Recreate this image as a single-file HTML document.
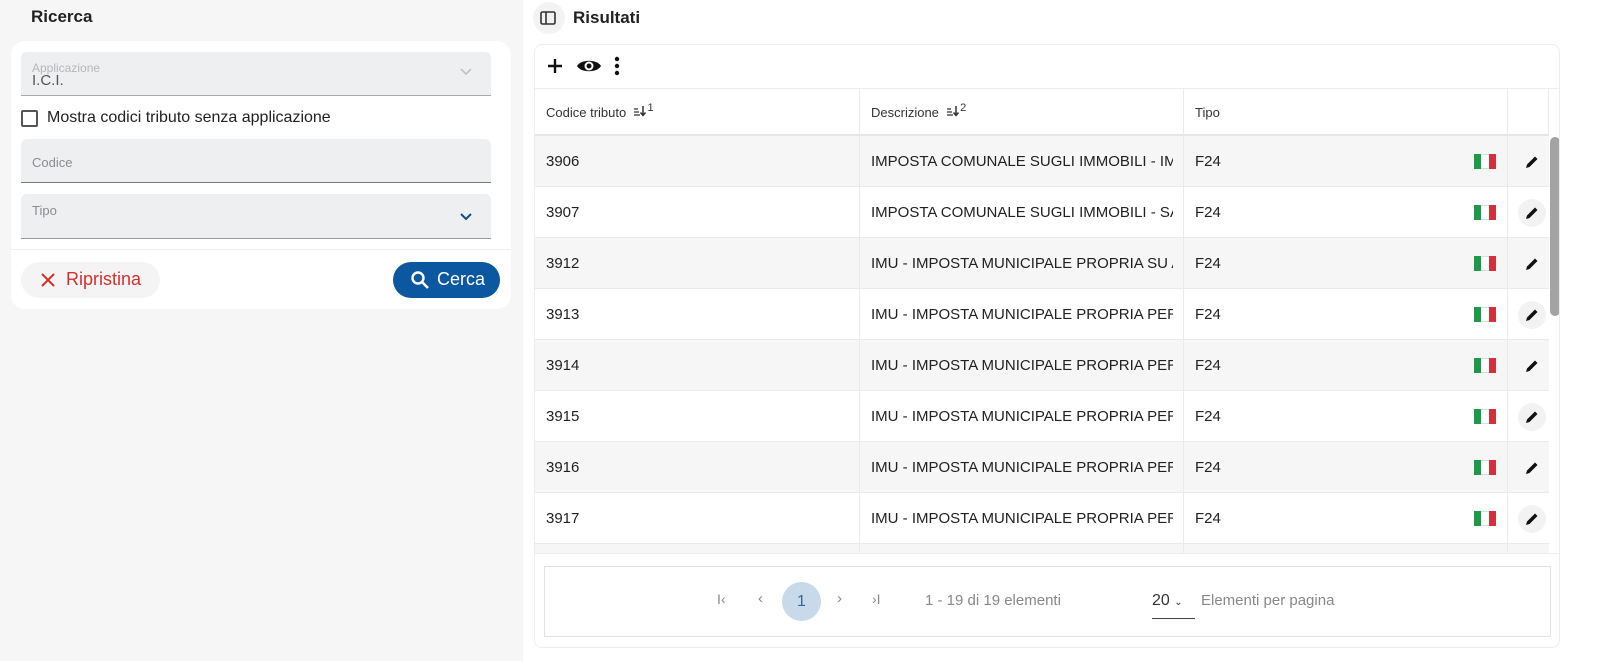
<!DOCTYPE html>
<html><head><meta charset="utf-8"><style>
*{box-sizing:border-box;margin:0;padding:0}
body{width:1600px;height:661px;overflow:hidden;background:#fff;font-family:"Liberation Sans",sans-serif;color:#212121;position:relative}
.left{position:absolute;left:0;top:0;width:523px;height:661px;background:#f6f6f6}
.abs{position:absolute}
.field{position:absolute;left:21px;width:470px;background:#eeeff1;border-radius:6px 6px 0 0;border-bottom:1px solid #777}
.lbl{position:absolute;left:11px;font-size:12px;color:#8a8c90}
.card{position:absolute;left:534px;top:44px;width:1026px;height:604px;border:1px solid #eceeee;border-radius:8px;overflow:hidden;background:#fff}
.row{position:absolute;left:0;width:1014px;height:51px;border-bottom:1px solid #ebebeb;font-size:15px}
.row.s{background:#f6f6f6}
.c{position:absolute;top:0;height:51px;line-height:51px;overflow:hidden;white-space:nowrap;border-right:1px solid #ebebeb}
.h{position:absolute;top:0;height:46px;border-right:1px solid #ebebeb;padding-left:11px;padding-top:16px;font-size:13px;white-space:nowrap}
.flag{position:absolute;left:939px;top:18px;width:22px;height:15px;display:flex}
.flag i{flex:1}
.pen{position:absolute;left:983px;top:12px;width:28px;height:28px;border-radius:50%}
.sup{position:relative;top:-6px;font-size:11px}
</style></head><body>
<div class="left">
  <div class="abs" style="left:31px;top:7px;font-size:17px;font-weight:bold;color:#222">Ricerca</div>
  <div class="abs" style="left:11px;top:41px;width:500px;height:268px;background:#fff;border-radius:14px"></div>
  <div class="field" style="top:52px;height:44px;border-bottom-color:#aaa">
    <div class="lbl" style="top:9px;color:#b5b7ba">Applicazione</div>
    <div class="abs" style="left:11px;top:20px;font-size:15px;color:#555">I.C.I.</div>
    <svg class="abs" style="left:438px;top:15px" width="14" height="10" viewBox="0 0 14 10"><path d="M2 2l5 5 5-5" fill="none" stroke="#c2c4c8" stroke-width="1.8"/></svg>
  </div>
  <div class="abs" style="left:21px;top:110px;width:17px;height:17px;border:2px solid #555;border-radius:2px"></div>
  <div class="abs" style="left:47px;top:109px;font-size:16px;color:#222">Mostra codici tributo senza applicazione</div>
  <div class="field" style="top:139px;height:44px"><div class="lbl" style="top:16px;font-size:13px">Codice</div></div>
  <div class="field" style="top:194px;height:45px;border-bottom-color:#999"><div class="lbl" style="top:9px;font-size:13px">Tipo</div>
    <svg class="abs" style="left:438px;top:18px" width="14" height="10" viewBox="0 0 14 10"><path d="M2 2l5 5 5-5" fill="none" stroke="#0b4f8a" stroke-width="2"/></svg></div>
  <div class="abs" style="left:11px;top:249px;width:500px;height:1px;background:#eee"></div>
  <div class="abs" style="left:21px;top:262px;width:139px;height:36px;border-radius:18px;background:#f4f4f4"></div>
  <svg class="abs" style="left:40px;top:272px" width="16" height="16" viewBox="0 0 16 16"><path d="M2 2l12 12M14 2L2 14" stroke="#d32f2f" stroke-width="2"/></svg>
  <div class="abs" style="left:66px;top:269px;font-size:18px;color:#d32f2f">Ripristina</div>
  <div class="abs" style="left:393px;top:262px;width:107px;height:36px;border-radius:18px;background:#0b57a0"></div>
  <svg class="abs" style="left:410px;top:270px" width="20" height="20" viewBox="0 0 20 20"><circle cx="8" cy="8" r="5.5" fill="none" stroke="#fff" stroke-width="2.4"/><path d="M12 12l6 6" stroke="#fff" stroke-width="2.6"/></svg>
  <div class="abs" style="left:437px;top:269px;font-size:18px;color:#fff">Cerca</div>
</div>
<div class="abs" style="left:533px;top:2px;width:32px;height:32px;border-radius:50%;background:#f3f3f3"></div>
<svg class="abs" style="left:540px;top:11px" width="16" height="14" viewBox="0 0 16 14"><rect x="1" y="1" width="14" height="12" rx="1.5" fill="none" stroke="#333" stroke-width="1.6"/><path d="M6 1v12" stroke="#333" stroke-width="1.6"/></svg>
<div class="abs" style="left:573px;top:8px;font-size:17px;font-weight:bold;color:#222">Risultati</div>
<div class="card">
  <svg class="abs" style="left:11px;top:12px" width="18" height="18" viewBox="0 0 18 18"><path d="M9 2v14M2 9h14" stroke="#111" stroke-width="2.4"/></svg>
  <svg class="abs" style="left:41px;top:12px" width="26" height="18" viewBox="0 0 26 18"><path d="M1 9C5 2 21 2 25 9C21 16 5 16 1 9Z" fill="#111"/><circle cx="13" cy="9" r="4.5" fill="#fff"/><circle cx="13" cy="9" r="2.5" fill="#111"/></svg>
  <svg class="abs" style="left:78px;top:11px" width="8" height="20" viewBox="0 0 8 20"><circle cx="4" cy="3" r="2.2" fill="#111"/><circle cx="4" cy="10" r="2.2" fill="#111"/><circle cx="4" cy="17" r="2.2" fill="#111"/></svg>
  <div class="abs" style="left:0;top:43px;width:1026px;height:1px;background:#eceeee"></div>
  <div class="abs" style="left:0;top:44px;width:1014px;height:47px;border-bottom:2px solid #e6e6e6;color:#333">
    <div class="h" style="left:0;width:325px">Codice tributo &nbsp;<svg width="14" height="12" viewBox="0 0 14 12"><path d="M1 4h4M1 7h5M1 10h6" stroke="#333" stroke-width="1.3"/><path d="M10 1v9M7.5 7.5l2.5 3 2.5-3" fill="none" stroke="#333" stroke-width="1.5"/></svg><span class="sup">1</span></div>
    <div class="h" style="left:325px;width:324px">Descrizione &nbsp;<svg width="14" height="12" viewBox="0 0 14 12"><path d="M1 4h4M1 7h5M1 10h6" stroke="#333" stroke-width="1.3"/><path d="M10 1v9M7.5 7.5l2.5 3 2.5-3" fill="none" stroke="#333" stroke-width="1.5"/></svg><span class="sup">2</span></div>
    <div class="h" style="left:649px;width:324px">Tipo</div>
    <div class="h" style="left:973px;width:41px"></div>
  </div>
  <div id="rows"></div>
  <div class="abs" style="left:1015px;top:92px;width:10px;height:179px;background:#a3a3a3;border-radius:5px"></div>
  <div class="abs" style="left:0;top:508px;width:1026px;height:96px;background:#fff;border-top:1px solid #eee"></div>
  <div class="abs" style="left:9px;top:521px;width:1007px;height:71px;border:1px solid #e3e3e3"></div>
  <div class="abs" style="left:182px;top:546px;font-size:14px;color:#888">I‹</div>
  <div class="abs" style="left:223px;top:545px;font-size:15px;color:#888">‹</div>
  <div class="abs" style="left:247px;top:537px;width:39px;height:39px;border-radius:50%;background:#c8d9ea;text-align:center;line-height:39px;font-size:16px;color:#2d6aa3">1</div>
  <div class="abs" style="left:302px;top:545px;font-size:15px;color:#888">›</div>
  <div class="abs" style="left:337px;top:546px;font-size:14px;color:#888">›I</div>
  <div class="abs" style="left:390px;top:547px;font-size:15px;color:#888">1 - 19 di 19 elementi</div>
  <div class="abs" style="left:617px;top:547px;font-size:16px;color:#333">20 <span style="font-size:10px">⌄</span></div>
  <div class="abs" style="left:617px;top:573px;width:43px;height:1px;background:#444"></div>
  <div class="abs" style="left:666px;top:547px;font-size:15px;color:#888">Elementi per pagina</div>
</div>
<script>
var d=[["3906","IMPOSTA COMUNALE SUGLI IMMOBILI - IMPOSTA"],["3907","IMPOSTA COMUNALE SUGLI IMMOBILI - SANZIONI"],["3912","IMU - IMPOSTA MUNICIPALE PROPRIA SU ABITAZIONE"],["3913","IMU - IMPOSTA MUNICIPALE PROPRIA PER FABBRICATI"],["3914","IMU - IMPOSTA MUNICIPALE PROPRIA PER TERRENI"],["3915","IMU - IMPOSTA MUNICIPALE PROPRIA PER TERRENI"],["3916","IMU - IMPOSTA MUNICIPALE PROPRIA PER AREE"],["3917","IMU - IMPOSTA MUNICIPALE PROPRIA PER AREE"],["3918","IMU - IMPOSTA MUNICIPALE PROPRIA PER ALTRI"]];
var h="";d.forEach(function(r,i){h+='<div class="row'+(i%2==0?' s':'')+'" style="top:'+(91+i*51)+'px"><div class="c" style="left:0;width:325px;padding-left:11px">'+r[0]+'</div><div class="c" style="left:325px;width:324px;padding-left:11px;padding-right:10px"><div style="overflow:hidden;width:302px">'+r[1]+'</div></div><div class="c" style="left:649px;width:324px;padding-left:11px">F24</div><div class="flag"><i style="background:#1c9a48"></i><i style="background:#fff;border-top:1px solid #cfe6d6;border-bottom:1px solid #cfe6d6"></i><i style="background:#d32f3c"></i></div><div class="c" style="left:973px;width:41px;border:none"></div><div class="pen" style="background:'+(i%2?'#f2f2f2':'transparent')+'"><svg style="position:absolute;left:7px;top:7px" width="14" height="14" viewBox="0 0 14 14"><path d="M1 13l1-3.5L10 1.5l2.5 2.5L4.5 12Z" fill="#111"/></svg></div></div>'});
document.getElementById("rows").innerHTML=h;
</script>
</body></html>
